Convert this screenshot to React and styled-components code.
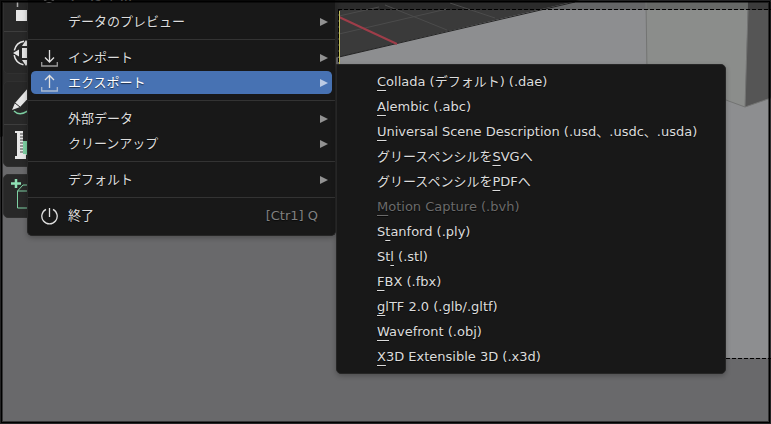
import styled, { createGlobalStyle } from 'styled-components'

const GlobalStyle = createGlobalStyle`
  * {
    box-sizing: border-box;
  }

  body {
    margin: 0;
    background: #000;
    font-family: "DejaVu Sans", "Noto Sans CJK JP", sans-serif;
    font-size: 13px;
    color: #dcdcdc;
  }
`

const Editor = styled.main`
  position: relative;
  display: flex;
  align-items: flex-start;
  min-height: 100vh;
  overflow: hidden;
  background: #69696b;
`

const Scene = styled.svg`
  position: absolute;
  inset: 0;
  width: 100%;
  height: 100%;
`

// black edge of the editor area, over the scene and the menus
const Edge = styled.div`
  position: absolute;
  inset: 0;
  border: 1px solid rgba(0, 0, 0, 0.65);
  box-shadow: inset 0 0 0 1px #000, inset 0 0 0 2px rgba(0, 0, 0, 0.5);
  pointer-events: none;
`

const Toolbar = styled.nav`
  position: relative;
  display: flex;
  flex-direction: column;
  flex: none;
  gap: 7px;
  width: 27px;
  padding-left: 3px;
  overflow: hidden;
`

const ToolGroup = styled.div`
  display: flex;
  flex-direction: column;
  width: 44px;
  background: #282828;
  border: 1px solid #303030;
  border-radius: ${({ $first }) => ($first ? '0 0 5px 5px' : '5px')};
`

const Tool = styled.button`
  height: ${({ $h }) => $h || 42}px;
  padding: 0;
  border: none;
  background: none;

  & + & {
    border-top: 1px solid #3d3d3d;
  }

  svg {
    display: block;
  }
`

const Menu = styled.div`
  position: relative;
  display: flex;
  flex-direction: column;
  flex: none;
  width: 309px;
  height: 236px;
  justify-content: flex-end;
  padding-bottom: 7px;
  background: #181818;
  border: 1px solid #262626;
  border-top: none;
  border-radius: 0 0 5px 5px;
  box-shadow: 0 2px 5px rgba(0, 0, 0, 0.25);
`

const Submenu = styled(Menu)`
  width: 390px;
  height: auto;
  margin-top: 64px;
  padding: 4px 0;
  border: 1px solid #262626;
  border-radius: 0 5px 5px 5px;
`

const Item = styled.button`
  display: flex;
  align-items: center;
  flex: none;
  height: 25px;
  margin: 0 3px;
  padding: 0 4px 0 10px;
  border: solid transparent;
  border-width: 1px 0;
  border-radius: 5px;
  background: ${({ $active }) => ($active ? '#4772b3' : 'none')};
  background-clip: padding-box;
  color: ${({ $active }) => ($active ? '#fff' : 'inherit')};
  font: inherit;
  line-height: 20px;
  text-align: left;
  text-shadow: 0 1px 1px rgba(0, 0, 0, 0.6);
  white-space: nowrap;

  svg {
    flex: none;
  }
`

const ExportItem = styled(Item)`
  padding: 0 37px;

  &:disabled {
    color: #6b6b6b;
  }
`

const Icon = styled.span`
  display: flex;
  width: 27px;
`

const Label = styled.span`
  flex: 1;
`

const Shortcut = styled.span`
  padding-right: 10px;
  color: #808080;
`

const Arrow = styled.svg`
  fill: ${({ $active }) => ($active ? '#bccbe4' : '#929292')};
`

const Separator = styled.hr`
  flex: none;
  width: 100%;
  height: 1px;
  margin: 5px 0;
  border: none;
  background: #333;
`

const Key = styled.u`
  text-decoration-thickness: 1px;
  text-underline-offset: 4px;
  text-decoration-skip-ink: none;
`

const icons = {
  append: <circle cx="8" cy="8" r="6" />,
  import: (
    <>
      <path d="M8.500 1v12M4 8.500l4.500 4.500 4.500-4.500" />
      <path d="M.7 13v4h15.600v-4" opacity=".65" />
    </>
  ),
  export: (
    <>
      <path d="M8.500 14V1.500M4 6l4.500-4.500L13 6" />
      <path d="M.7 13v4h15.600v-4" opacity=".65" />
    </>
  ),
  quit: <path d="M8.500 1v9M5 2.300a7.700 7.700 0 1 0 7 0" />,
}

const fileMenu = [
  { label: 'アペンド...', icon: 'append' },
  { label: 'データのプレビュー', sub: true },
  null,
  { label: 'インポート', icon: 'import', sub: true },
  { label: 'エクスポート', icon: 'export', sub: true, active: true },
  null,
  { label: '外部データ', sub: true },
  { label: 'クリーンアップ', sub: true },
  null,
  { label: 'デフォルト', sub: true },
  null,
  { label: '終了', icon: 'quit', shortcut: '[Ctr1] Q' },
]

// [before, access key, after, disabled]
const exportMenu = [
  ['', 'C', 'ollada (デフォルト) (.dae)'],
  ['', 'A', 'lembic (.abc)'],
  ['', 'U', 'niversal Scene Description (.usd、.usdc、.usda)'],
  ['グリースペンシルを', 'S', 'VGへ'],
  ['グリースペンシルを', 'P', 'DFへ'],
  ['', 'M', 'otion Capture (.bvh)', true],
  ['S', 't', 'anford (.ply)'],
  ['St', 'l', ' (.stl)'],
  ['', 'F', 'BX (.fbx)'],
  ['', 'g', 'lTF 2.0 (.glb/.gltf)'],
  ['', 'W', 'avefront (.obj)'],
  ['', 'X', '3D Extensible 3D (.x3d)'],
]

const Viewport = () => (
  <Scene viewBox="0 0 771 424" preserveAspectRatio="xMinYMin slice" aria-hidden="true">
    <rect width="771" height="424" fill="#69696b" />
    <path d="M0 0H580L338 57 0 137z" fill="#2b2b2b" />
    <path d="M339 10H538L339 57z" fill="#3a3a3a" />
    <path d="M339 34l108-25M339 16l40-9M385 5l62 25M450 3l45 15" stroke="#4b4b4b" fill="none" />
    <path d="M339 57L538 10H771V358H339z" fill="#8d8e90" />
    <path d="M538 10L575 2H771V10z" fill="#646566" />
    <path d="M339 57L575 2" stroke="#242424" />
    <path d="M646 10H747L745 107 646 71z" fill="#8b8d8b" />
    <path d="M646 2H748V10H646z" fill="#666866" />
    <path d="M748 2H771V98L745 107z" fill="#555" />
    <path d="M748 2H771V10H748z" fill="#3c3c3c" />
    <path d="M646 2L647 71L745 107L771 98M745 107L748 10" stroke="#737473" fill="none" />
    <path d="M339 17L397 44" stroke="#9e3d49" strokeWidth="2" />
    <path d="M339.500 11V65" stroke="#c6c35e" />
    <path d="M338 9.500H771M338.500 10V65M726 358.500H771" stroke="#000" strokeDasharray="4 2" fill="none" />
  </Scene>
)

const MenuIcon = ({ name }) => (
  <svg width="18" height="18" viewBox="0 0 18 18" fill="none" stroke="#e0e0e0" strokeWidth="1.3">
    {icons[name]}
  </svg>
)

const App = () => {
  return (
    <>
      <GlobalStyle />
      <Editor>
        <Viewport />
        <Toolbar aria-label="Tools">
          <ToolGroup $first>
            <Tool $h={30} aria-label="Scale">
              <svg width="42" height="30">
                <path d="M13.500 0V6" stroke="#aaa" strokeWidth="1.500" />
                <rect x="12" y="9" width="14" height="11" fill="#e6e6e6" />
              </svg>
            </Tool>
            <Tool $h={42} aria-label="Transform">
              <svg width="42" height="41">
                <circle cx="22" cy="21" r="12" fill="none" stroke="#e6e6e6" strokeWidth="1.500" strokeDasharray="14 4.850" strokeDashoffset="-2.500" />
                <path d="M9 21l6-3.500v7zM22 8l-4 6h8zM22 34l-4-6h8z" fill="#e6e6e6" />
                <rect x="18" y="16" width="10" height="10" fill="#e6e6e6" />
              </svg>
            </Tool>
          </ToolGroup>
          <ToolGroup>
            <Tool aria-label="Annotate">
              <svg width="42" height="42">
                <path d="M8 28l3-7 13-15 6 4-14 15z" fill="#e6e6e6" />
                <path d="M11 21l5 4" stroke="#282828" />
                <path d="M10 29q6 6 15-1" stroke="#7ed0a3" strokeWidth="1.500" fill="none" />
              </svg>
            </Tool>
            <Tool aria-label="Measure">
              <svg width="42" height="41">
                <rect x="19" y="16" width="14" height="14" fill="#7ed0a3" />
                <path d="M11 6h8v23h3v5H11v-3h2V8h-2z" fill="#e6e6e6" />
                <path d="M16 9h3M16 12h3M16 15h3M16 18h3M16 21h3M16 24h3M16 27h3" stroke="#444" />
              </svg>
            </Tool>
          </ToolGroup>
          <ToolGroup>
            <Tool aria-label="Add Cube">
              <svg width="42" height="42">
                <path d="M12 4v9M7 8.500h10" stroke="#8fe0b4" strokeWidth="2.500" />
                <path d="M13.500 33V16H32V33zM13.500 16L19 10H36L32 16" stroke="#7ed0a3" fill="none" />
              </svg>
            </Tool>
          </ToolGroup>
        </Toolbar>

        <Menu role="menu" aria-label="File">
          {fileMenu.map((item, i) =>
            item ? (
              <Item key={i} role="menuitem" $active={item.active}>
                <Icon>{item.icon && <MenuIcon name={item.icon} />}</Icon>
                <Label>{item.label}</Label>
                {item.shortcut && <Shortcut>{item.shortcut}</Shortcut>}
                {item.sub && (
                  <Arrow $active={item.active} width="8" height="8" viewBox="0 0 8 8">
                    <path d="M0 0l8 4-8 4z" />
                  </Arrow>
                )}
              </Item>
            ) : (
              <Separator key={i} />
            )
          )}
        </Menu>

        <Submenu role="menu" aria-label="エクスポート">
          {exportMenu.map(([before, key, after, disabled]) => (
            <ExportItem key={before + key + after} role="menuitem" disabled={disabled}>
              <span>
                {before}
                <Key>{key}</Key>
                {after}
              </span>
            </ExportItem>
          ))}
        </Submenu>
        <Edge />
      </Editor>
    </>
  )
}

export default App
